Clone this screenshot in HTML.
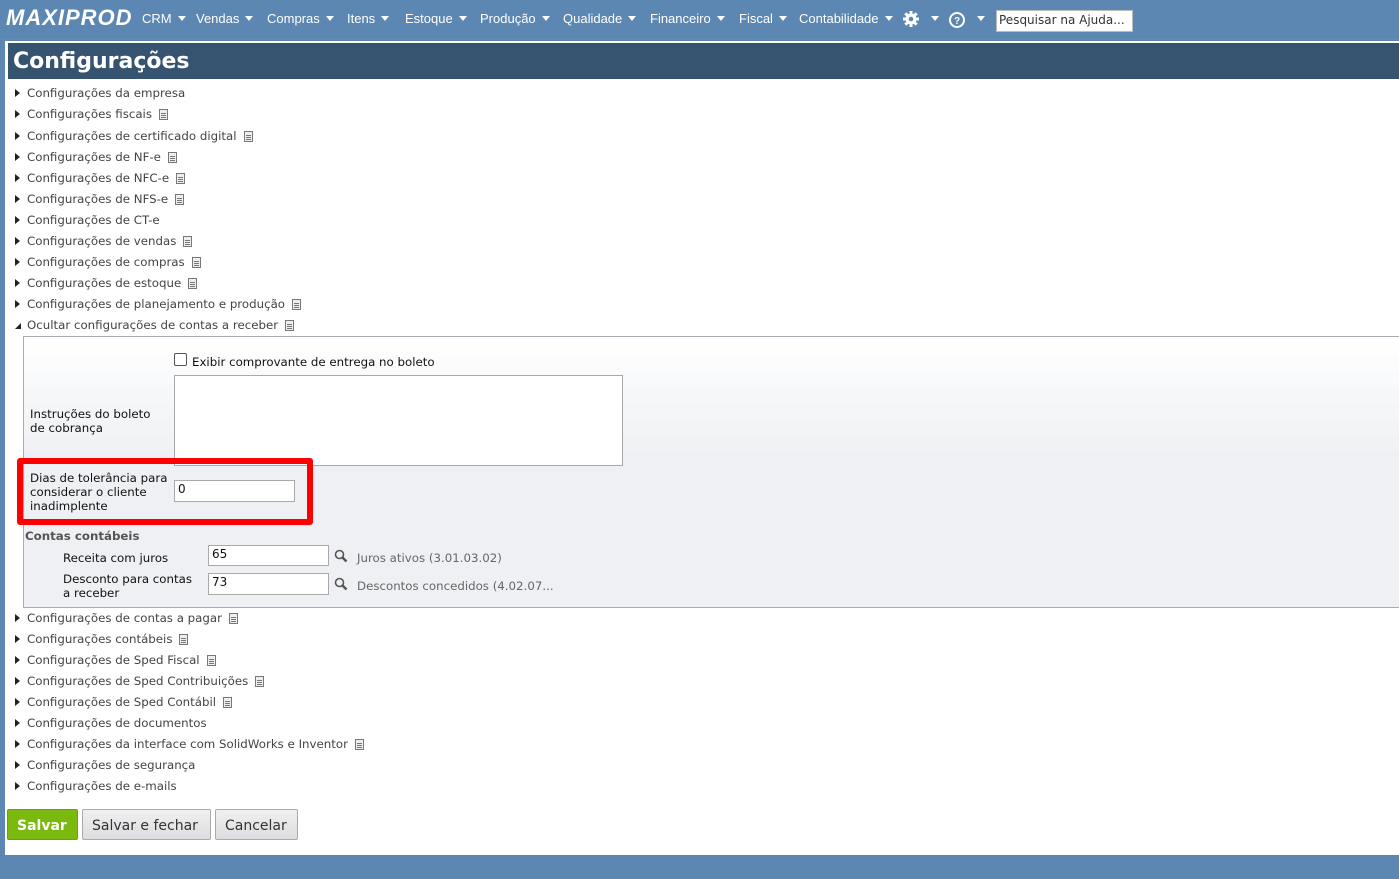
<!DOCTYPE html>
<html><head><meta charset="utf-8"><style>
*{margin:0;padding:0;box-sizing:border-box}
body{width:1399px;height:879px;background:#5b87b2;font-family:"DejaVu Sans","Liberation Sans",sans-serif;position:relative;overflow:hidden}
.nav{position:absolute;left:0;top:0;width:1399px;height:40px;border-bottom:1px solid #7a8594}
.logo{position:absolute;left:6px;top:5px;font:italic bold 22px "Liberation Sans",sans-serif;color:#fff;letter-spacing:1px}
.mi{position:absolute;top:11px;font:13px "Liberation Sans",sans-serif;color:#fff;white-space:nowrap}
.mi:after{content:"";display:inline-block;margin-left:6px;border-left:4px solid transparent;border-right:4px solid transparent;border-top:5px solid #fff;vertical-align:2px}
.search{position:absolute;left:996px;top:10px;width:137px;height:22px;background:#fff;border:1px solid #bbb;font:12px "DejaVu Sans",sans-serif;color:#333;padding:2px 2px}
.panel{position:absolute;left:5px;top:41px;width:1394px;height:814px;background:#fff}
.hdr{position:absolute;left:3px;top:2px;width:1391px;height:36px;background:#36536f;color:#fff;font:bold 22px "DejaVu Sans",sans-serif;padding:6px 0 0 5px}
.it{position:absolute;left:10px;font-size:11.8px;color:#444;white-space:nowrap}
.it:before{content:"";display:inline-block;border-top:4px solid transparent;border-bottom:4px solid transparent;border-left:5px solid #222;margin-right:7px;vertical-align:0}
.it.open:before{border:none;width:0;height:0;border-left:6px solid transparent;border-bottom:6px solid #222;margin-right:6px}
.doc{display:inline-block;width:9px;height:11px;border:1px solid #777;margin-left:7px;vertical-align:-2px;background:linear-gradient(#777,#777) 1px 3px/5px 1px no-repeat,linear-gradient(#777,#777) 1px 5px/5px 1px no-repeat,linear-gradient(#777,#777) 1px 7px/5px 1px no-repeat;background-color:#eee}
.box{position:absolute;left:18px;top:295px;width:1376px;height:272px;border:1px solid #a8adb3;border-right:none;background:linear-gradient(#fff 0%,#eef0f3 45%,#eef0f3 100%)}
.t{position:absolute;font-size:11.8px;color:#111;line-height:14px}
.inp{position:absolute;background:#fff;border:1px solid #a9a9a9;font-size:12px;padding:1px 3px;color:#111}
.g{color:#666}
.btn{position:absolute;top:768px;height:31px;border:1px solid #aaa;border-radius:2px;background:linear-gradient(#f0f0f0,#dcdde0);font-size:14px;color:#333;padding:8px 9px 0}
</style></head><body>
<div class="nav">
<div class="logo">MAXIPROD</div>
<div class="mi" style="left:142px">CRM</div>
<div class="mi" style="left:196px">Vendas</div>
<div class="mi" style="left:267px">Compras</div>
<div class="mi" style="left:347px">Itens</div>
<div class="mi" style="left:405px">Estoque</div>
<div class="mi" style="left:480px">Produção</div>
<div class="mi" style="left:563px">Qualidade</div>
<div class="mi" style="left:650px">Financeiro</div>
<div class="mi" style="left:739px">Fiscal</div>
<div class="mi" style="left:799px">Contabilidade</div>
<svg style="position:absolute;left:902px;top:10px" width="18" height="18" viewBox="0 0 18 18"><g fill="#fff"><circle cx="9" cy="9" r="5.5"/><rect x="7.5" y="1" width="3" height="16"/><rect x="1" y="7.5" width="16" height="3"/><rect x="7.5" y="1" width="3" height="16" transform="rotate(45 9 9)"/><rect x="7.5" y="1" width="3" height="16" transform="rotate(-45 9 9)"/></g><circle cx="9" cy="9" r="2.3" fill="#5b87b2"/></svg>
<div class="mi" style="left:925px"></div>
<svg style="position:absolute;left:948px;top:11px" width="18" height="18" viewBox="0 0 18 18"><circle cx="9" cy="9" r="7" fill="none" stroke="#fff" stroke-width="2"/><text x="9" y="13" text-anchor="middle" font-size="10" font-weight="bold" fill="#fff" font-family="Liberation Sans">?</text></svg>
<div class="mi" style="left:971px"></div>
<div class="search">Pesquisar na Ajuda...</div>
</div>
<div class="panel">
<div class="hdr">Configurações</div>
<div class="it" style="top:45px">Configurações da empresa</div>
<div class="it" style="top:66px">Configurações fiscais<span class="doc"></span></div>
<div class="it" style="top:88px">Configurações de certificado digital<span class="doc"></span></div>
<div class="it" style="top:109px">Configurações de NF-e<span class="doc"></span></div>
<div class="it" style="top:130px">Configurações de NFC-e<span class="doc"></span></div>
<div class="it" style="top:151px">Configurações de NFS-e<span class="doc"></span></div>
<div class="it" style="top:172px">Configurações de CT-e</div>
<div class="it" style="top:193px">Configurações de vendas<span class="doc"></span></div>
<div class="it" style="top:214px">Configurações de compras<span class="doc"></span></div>
<div class="it" style="top:235px">Configurações de estoque<span class="doc"></span></div>
<div class="it" style="top:256px">Configurações de planejamento e produção<span class="doc"></span></div>
<div class="it open" style="top:277px">Ocultar configurações de contas a receber<span class="doc"></span></div>
<div class="box"></div>
<div style="position:absolute;left:169px;top:312px;width:13px;height:13px;border:1px solid #555;border-radius:2px;background:#fff"></div>
<div class="t" style="left:187px;top:314px">Exibir comprovante de entrega no boleto</div>
<div class="t" style="left:25px;top:366px">Instruções do boleto<br>de cobrança</div>
<div class="inp" style="left:169px;top:334px;width:449px;height:91px"></div>
<div class="t" style="left:25px;top:430px">Dias de tolerância para<br>considerar o cliente<br>inadimplente</div>
<div class="inp" style="left:169px;top:439px;width:121px;height:22px">0</div>
<div style="position:absolute;left:12px;top:417px;width:296px;height:67px;border:6px solid #f00;border-radius:3px"></div>
<div class="t" style="left:20px;top:488px;font-weight:bold;color:#555">Contas contábeis</div>
<div class="t" style="left:58px;top:510px">Receita com juros</div>
<div class="inp" style="left:203px;top:504px;width:121px;height:21px">65</div>
<div class="t g" style="left:352px;top:510px">Juros ativos (3.01.03.02)</div>
<div class="t" style="left:58px;top:531px">Desconto para contas<br>a receber</div>
<div class="inp" style="left:203px;top:532px;width:121px;height:22px">73</div>
<div class="t g" style="left:352px;top:538px">Descontos concedidos (4.02.07...</div>
<svg style="position:absolute;left:329px;top:508px" width="14" height="14"><circle cx="5.5" cy="5.5" r="4" fill="none" stroke="#555" stroke-width="1.6"/><path d="M8.5 8.5L12.5 12.5" stroke="#555" stroke-width="2.5"/></svg>
<svg style="position:absolute;left:329px;top:536px" width="14" height="14"><circle cx="5.5" cy="5.5" r="4" fill="none" stroke="#555" stroke-width="1.6"/><path d="M8.5 8.5L12.5 12.5" stroke="#555" stroke-width="2.5"/></svg>
<div class="it" style="top:570px">Configurações de contas a pagar<span class="doc"></span></div>
<div class="it" style="top:591px">Configurações contábeis<span class="doc"></span></div>
<div class="it" style="top:612px">Configurações de Sped Fiscal<span class="doc"></span></div>
<div class="it" style="top:633px">Configurações de Sped Contribuições<span class="doc"></span></div>
<div class="it" style="top:654px">Configurações de Sped Contábil<span class="doc"></span></div>
<div class="it" style="top:675px">Configurações de documentos</div>
<div class="it" style="top:696px">Configurações da interface com SolidWorks e Inventor<span class="doc"></span></div>
<div class="it" style="top:717px">Configurações de segurança</div>
<div class="it" style="top:738px">Configurações de e-mails</div>
<div class="btn" style="left:2px;width:71px;background:#7cb90f;border-color:#6aa00a;color:#fff;font-weight:bold">Salvar</div>
<div class="btn" style="left:77px;width:129px">Salvar e fechar</div>
<div class="btn" style="left:210px;width:83px">Cancelar</div>
</div>
</body></html>
